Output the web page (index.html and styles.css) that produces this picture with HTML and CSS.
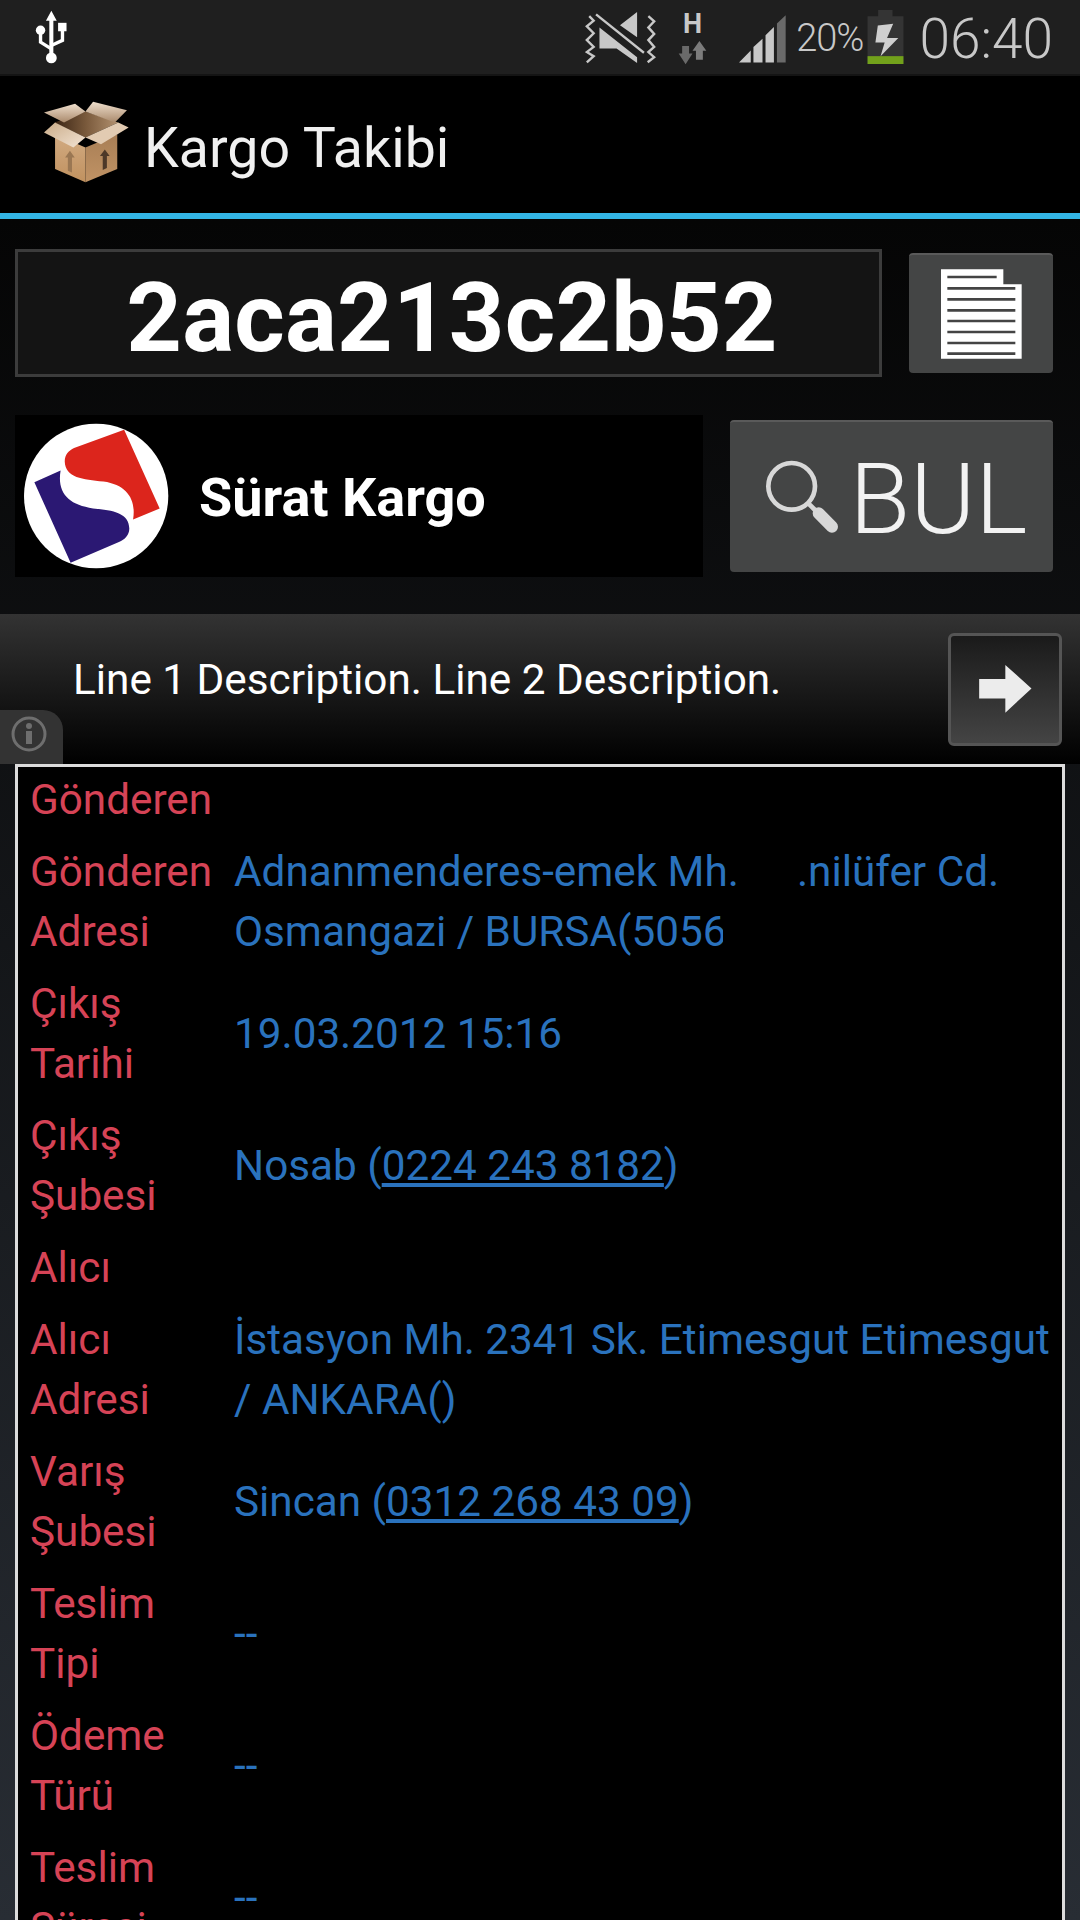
FILE: index.html
```html
<!DOCTYPE html>
<html lang="tr">
<head>
<meta charset="utf-8">
<title>Kargo Takibi</title>
<link rel="stylesheet" href="styles.css">
</head>
<body>
<div class="screen">
  <header class="status">
    <svg class="usb" width="34" height="54" viewBox="95 30 98 160">
      <path d="M145 32l16 30h-10v98h-12V62h-10z" fill="#fff"/>
      <path d="M113 90v35l32 20M178 90v30l-33 15" fill="none" stroke="#fff" stroke-width="10"/>
      <circle cx="113" cy="90" r="14" fill="#fff"/>
      <rect x="165" y="68" width="25" height="25" fill="#fff"/>
      <circle cx="145" cy="172" r="16" fill="#fff"/>
    </svg>
    <div class="status-right">
      <svg class="mute" width="71" height="53" viewBox="135 30 203 155">
        <path d="M145 45l13 13-20 17 20 20-20 20 20 20-20 15 20 12-20 18" fill="none" stroke="#c8c8c8" stroke-width="7"/>
        <path d="M318 45l17 15-17 18 17 19-17 18 17 20-17 15 17 15-19 15" fill="none" stroke="#c8c8c8" stroke-width="7"/>
        <path d="M285 33v74l-50-35z M175 78l110 87v17l-60-42h-50z" fill="#c8c8c8"/>
        <path d="M165 40l140 112" fill="none" stroke="#c8c8c8" stroke-width="7"/>
      </svg>
      <div class="net">
        <span class="net-h">H</span>
        <svg width="29" height="25" viewBox="400 115 84 72">
          <path d="M412 132h20v22h10l-20 31-20-31h10z" fill="#6a6a6a"/>
          <path d="M462 118l20 28h-10v26h-20v-26h-10z" fill="#7c7c7c"/>
        </svg>
      </div>
      <svg class="signal" width="47" height="48" viewBox="578 45 140 142">
        <path d="M578 186l35-36v36z M621 186v-46l27-25v71z M657 186v-81l25-25v106z" fill="#c8c8c8"/>
        <path d="M691 186V70l26-25v141z" fill="#6a6a6a"/>
      </svg>
      <span class="pct">20%</span>
      <svg class="battery" width="37" height="54" viewBox="955 30 105 158">
        <path d="M986 30h42v18h32v140H955V48h31z" fill="#343434"/>
        <rect x="955" y="165" width="105" height="23" fill="#72a11b"/>
        <path d="M985 75l45-5-18 42h33l-52 53 12-40h-27z" fill="#cfcfcf"/>
      </svg>
      <span class="clock">06:40</span>
    </div>
  </header>

  <nav class="actionbar">
    <svg class="box" width="85" height="82" viewBox="130 300 246 247" preserveAspectRatio="none">
      <defs>
        <linearGradient id="flap" x1="0" y1="0" x2="0" y2="1"><stop offset="0" stop-color="#efdfcd"/><stop offset="1" stop-color="#a9896b"/></linearGradient>
        <linearGradient id="flapf" x1="0" y1="0" x2="1" y2="1"><stop offset="0" stop-color="#c9ab88"/><stop offset="1" stop-color="#f3e4d4"/></linearGradient>
        <linearGradient id="inner" x1="0" y1="0" x2="1" y2="0"><stop offset="0" stop-color="#3a2414"/><stop offset=".5" stop-color="#7a5a3c"/><stop offset="1" stop-color="#b39270"/></linearGradient>
        <linearGradient id="facel" x1="0" y1="0" x2="0" y2="1"><stop offset="0" stop-color="#d2ab82"/><stop offset="1" stop-color="#c0915f"/></linearGradient>
        <linearGradient id="facer" x1="0" y1="0" x2="0" y2="1"><stop offset="0" stop-color="#a87e55"/><stop offset="1" stop-color="#c09365"/></linearGradient>
      </defs>
      <path d="M250 332l95 33-95 45-90-45z" fill="url(#inner)"/>
      <path d="M130 335l90-27 30 24-62 33z" fill="url(#flap)"/>
      <path d="M272 302l98 26-35 37-85-33z" fill="url(#flap)"/>
      <path d="M162 400l88 40v105l-88-40z" fill="url(#facel)"/>
      <path d="M250 440l92-40v105l-92 40z" fill="url(#facer)"/>
      <path d="M162 365l88 45-35 30-85-45z" fill="url(#flapf)"/>
      <path d="M345 365l30 15-80 50-45-20z" fill="#e2cbb2"/>
      <path d="M205 450l14 20h-8v45l-12-5v-40h-8z" fill="#9a7753"/>
      <path d="M306 446l14 20h-8v36l-12 6v-42h-8z" fill="#4d3828"/>
    </svg>
    <h1 class="title">Kargo Takibi</h1>
  </nav>

  <main class="content">
    <section class="row-track">
      <div class="track-input">2aca213c2b52</div>
      <button class="btn btn-paste" type="button" aria-label="Yapıştır">
        <svg width="81" height="90" viewBox="723 115 243 268">
          <path d="M723 115h187v45h55v223H723z" fill="#fff"/>
          <path d="M742 138h148M742 172h204M742 205h204M742 238h204M742 270h204M742 303h204M742 336h204M742 368h204" stroke="#444" stroke-width="8"/>
        </svg>
      </button>
    </section>

    <section class="row-carrier">
      <div class="carrier">
        <svg class="logo" width="145" height="146" viewBox="70 580 420 436" preserveAspectRatio="none">
          <ellipse cx="279" cy="798" rx="209" ry="216" fill="#fff"/>
          <path d="M360 600l103 235-77 33c9-58-16-103-86-113-60-7-110-10-112-60 0-20 12-33 27-40z" fill="#dc251c"/>
          <path d="M100 757l76-35c-11 68 24 103 94 113 60 5 105 15 105 60 0 20-13 33-30 40l-140 62z" fill="#2b1873"/>
        </svg>
        <span class="carrier-name">Sürat Kargo</span>
      </div>
      <button class="btn btn-find" type="button">
        <svg width="74" height="74" viewBox="195 688 222 222">
          <circle cx="275" cy="767" r="70" fill="none" stroke="#d8d8d8" stroke-width="14"/>
          <path d="M325 818l20 20" stroke="#d8d8d8" stroke-width="14"/>
          <path d="M356 848l40 40" stroke="#d8d8d8" stroke-width="36" stroke-linecap="round"/>
        </svg>
        <span class="find-label">BUL</span>
      </button>
    </section>

    <aside class="ad">
      <span class="ad-text">Line 1 Description. Line 2 Description.</span>
      <button class="ad-go" type="button" aria-label="Git">
        <svg width="55" height="48" viewBox="1272 198 157 143">
          <path d="M1272 240h78v-42l78 70-78 72v-42h-78z" fill="#ececec"/>
        </svg>
      </button>
      <div class="ad-info">
        <svg width="36" height="36" viewBox="0 0 36 36">
          <circle cx="18" cy="18" r="16" fill="none" stroke="#6e6e6e" stroke-width="3"/>
          <circle cx="18" cy="10" r="3" fill="#6e6e6e"/>
          <rect x="15" y="15" width="6" height="13" fill="#6e6e6e"/>
        </svg>
      </div>
    </aside>

    <section class="details">
      <div class="label">Gönderen</div><div class="value"></div>
      <div class="label">Gönderen Adresi</div>
      <div class="value">
        <div>Adnanmenderes-emek Mh.<span class="gap">.nilüfer Cd.</span></div>
        <div class="clipped">Osmangazi / BURSA(5056789</div>
      </div>
      <div class="label">Çıkış Tarihi</div><div class="value">19.03.2012 15:16</div>
      <div class="label">Çıkış Şubesi</div><div class="value">Nosab (<a class="tel" href="#">0224 243 8182</a>)</div>
      <div class="label">Alıcı</div><div class="value"></div>
      <div class="label">Alıcı Adresi</div><div class="value">İstasyon Mh. 2341 Sk. Etimesgut Etimesgut / ANKARA()</div>
      <div class="label">Varış Şubesi</div><div class="value">Sincan (<a class="tel" href="#">0312 268 43 09</a>)</div>
      <div class="label">Teslim Tipi</div><div class="value">--</div>
      <div class="label">Ödeme Türü</div><div class="value">--</div>
      <div class="label">Teslim Süresi</div><div class="value">--</div>
    </section>
  </main>
</div>
</body>
</html>
```

FILE: styles.css
```css
* { box-sizing: border-box; }
html, body { margin: 0; padding: 0; width: 1080px; height: 1920px; overflow: hidden; background: #000; }
body { font-family: Roboto, "Liberation Sans", sans-serif; color: #fff; }
button { font: inherit; color: inherit; padding: 0; }

.screen { width: 1080px; height: 1920px; display: flex; flex-direction: column; overflow: hidden; }

.status { flex: none; height: 76px; background: #1f1f1f; border-bottom: 2px solid #141414; display: flex; align-items: flex-start; justify-content: space-between; }
.usb { margin: 10px 0 0 34px; }
.status-right { display: flex; align-items: flex-start; }
.mute { margin: 11px 0 0 0; }
.net { margin: 11px 0 0 22px; width: 29px; display: flex; flex-direction: column; align-items: center; }
.net-h { font-size: 27px; font-weight: 700; line-height: 26px; color: #c8c8c8; }
.net svg { margin-top: 3px; }
.signal { margin: 15px 0 0 32px; }
.pct { margin: 17px 0 0 10px; font-size: 38px; line-height: 42px; font-weight: 300; color: #c8c8c8; letter-spacing: -1px; }
.battery { margin: 10px 0 0 4px; }
.clock { margin: 7px 27px 0 15px; font-size: 55px; line-height: 64px; font-weight: 300; color: #c8c8c8; }

.actionbar { flex: none; height: 137px; background: #000; display: flex; align-items: center; padding-left: 44px; }
.box { margin: -6px 15px 0 0; }
.title { margin: 8px 0 0; font-size: 55.5px; font-weight: 400; color: #f0f0f0; }

.content { flex: 1; min-height: 0; border-top: 6px solid #33b5e5; background: linear-gradient(#050505, #282d34); display: flex; flex-direction: column; }

.row-track { display: flex; align-items: center; padding: 30px 27px 0 15px; justify-content: space-between; }
.track-input { width: 867px; height: 128px; padding: 10px 0 0 7px; background: #141414; border: 3px solid #3c3c3c; display: flex; align-items: center; justify-content: center; font-size: 97px; font-weight: 700; letter-spacing: 0.2px; }
.btn { background: #444545; border: 0; border-top: 2px solid #5a5a5a; border-radius: 4px; display: flex; align-items: center; justify-content: center; }
.btn-paste { width: 144px; height: 120px; }
.row-carrier { display: flex; justify-content: space-between; padding: 38px 27px 0 15px; align-items: center; }
.carrier { width: 688px; height: 162px; background: #000; display: flex; align-items: center; padding-left: 9px; }
.carrier-name { margin: 2px 0 0 30px; font-size: 54px; font-weight: 700; }
.btn-find { width: 323px; height: 152px; padding-left: 10px; }
.find-label { margin: 4px 0 0 10px; font-size: 99px; font-weight: 300; color: #f2f2f2; }

.ad { position: relative; margin-top: 37px; height: 150px; flex: none; background: linear-gradient(#333, #000); display: flex; align-items: center; justify-content: space-between; padding: 0 18px 20px 73px; }
.ad-text { font-size: 42.3px; }
.ad-go { width: 114px; height: 113px; margin-top: 20px; border: 3px solid #555; border-radius: 6px; background: linear-gradient(#1a1a1a, #444); display: flex; align-items: center; justify-content: center; }
.ad-info { position: absolute; left: 0; bottom: 0; width: 63px; height: 54px; background: #333; border-top-right-radius: 20px; display: flex; padding: 6px 0 0 11px; }

.details { flex: 1; min-height: 0; overflow: hidden; margin: 0 15px; background: #000; border: 3px solid #dcdcdc; border-bottom: 0; padding: 3px 0 0 12px; display: grid; grid-template-columns: 180px 1fr; column-gap: 24px; row-gap: 12px; align-content: start; font-size: 42.25px; line-height: 60px; }
.label { color: #d64356; }
.value { color: #2a72bd; align-self: center; }
.gap { margin-left: 58px; }
.clipped { width: 489px; overflow: hidden; white-space: nowrap; }
.tel { color: inherit; text-decoration: underline; }
```
